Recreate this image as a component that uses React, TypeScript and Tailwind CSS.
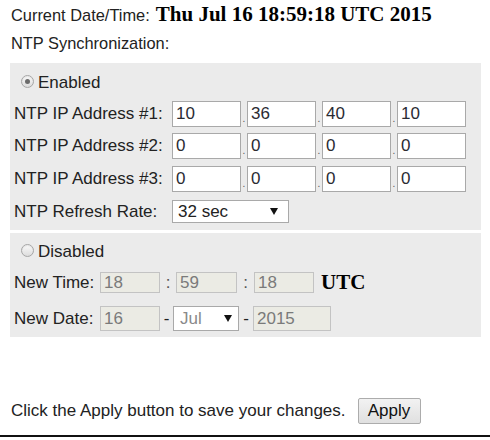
import React from 'react';

const Radio = ({ checked }: { checked?: boolean }) => (
  <span className="w-[13px] h-[13px] rounded-full border border-[#a6a6a6] bg-gradient-to-b from-[#fafafa] to-[#dcdcdc] flex items-center justify-center shadow-[inset_0_1px_1px_rgba(0,0,0,0.08)]">
    {checked && <span className="w-[5px] h-[5px] rounded-full bg-[#6b6b6b]" />}
  </span>
);

const Arrow = () => (
  <svg width="8" height="7" viewBox="0 0 8 7" className="shrink-0">
    <polygon points="0,0 8,0 4,7" fill="#111" />
  </svg>
);

const IpBox = ({ value }: { value: string }) => (
  <div className="w-[69px] h-full border border-[#a9a9a9] bg-white flex items-center pl-[3px] text-[#2b2b33]">
    {value}
  </div>
);

const Dot = () => (
  <span className="w-[6px] h-full flex items-end justify-center pb-[3px] text-[10px] leading-none text-[#555]">.</span>
);

const IpRow = ({ label, values, className }: { label: string; values: string[]; className: string }) => (
  <div className={`flex items-center h-[26px] ${className}`}>
    <span className="w-[162px] pl-[4px]">{label}</span>
    <IpBox value={values[0]} />
    <Dot />
    <IpBox value={values[1]} />
    <Dot />
    <IpBox value={values[2]} />
    <Dot />
    <IpBox value={values[3]} />
  </div>
);

const Disabled = ({ value, w }: { value: string; w: string }) => (
  <div className={`${w} h-full border border-[#c3c3c3] bg-[#ebebe4] flex items-center pl-[3px] text-[#7a7a7a]`}>
    {value}
  </div>
);

export default function App() {
  return (
    <div className="w-[490px] h-[440px] bg-white text-[17px] text-[#222] font-['Liberation_Sans',Arial,sans-serif] flex flex-col">
      <div className="h-[30px] flex items-center pl-[11px] text-[16.4px]">
        <span>Current Date/Time:</span>
        <span className="ml-[6px] font-bold text-[21px] text-black font-['Liberation_Serif','Times_New_Roman',serif]">
          Thu Jul 16 18:59:18 UTC 2015
        </span>
      </div>
      <div className="h-[26px] flex items-center pl-[11px] text-[16.4px]">NTP Synchronization:</div>

      {/* Enabled panel */}
      <div className="mt-[7px] ml-[10px] w-[471px] bg-[#ebebeb] flex flex-col pb-[7px]">
        <div className="mt-[6px] h-[24px] flex items-center pl-[11px] gap-[4px]">
          <Radio checked />
          <span className="pt-[3px]">Enabled</span>
        </div>
        <IpRow className="mt-[8px]" label="NTP IP Address #1:" values={['10', '36', '40', '10']} />
        <IpRow className="mt-[6px]" label="NTP IP Address #2:" values={['0', '0', '0', '0']} />
        <IpRow className="mt-[7px]" label="NTP IP Address #3:" values={['0', '0', '0', '0']} />
        <div className="mt-[8px] h-[23px] flex items-center">
          <span className="w-[162px] pl-[4px]">NTP Refresh Rate:</span>
          <div className="w-[117px] h-full border border-[#a9a9a9] bg-white flex items-center justify-between pl-[5px] pr-[10px]">
            <span>32 sec</span>
            <Arrow />
          </div>
        </div>
      </div>

      {/* Disabled panel */}
      <div className="mt-[3px] ml-[10px] w-[471px] bg-[#ebebeb] flex flex-col pb-[6px]">
        <div className="mt-[5px] h-[24px] flex items-center pl-[11px] gap-[4px]">
          <Radio />
          <span className="pt-[3px]">Disabled</span>
        </div>
        <div className="mt-[10px] h-[21px] flex items-center">
          <span className="w-[90px] pl-[4px]">New Time:</span>
          <Disabled value="18" w="w-[60px]" />
          <span className="w-[16px] text-center text-[#555]">:</span>
          <Disabled value="59" w="w-[61px]" />
          <span className="w-[17px] text-center text-[#555]">:</span>
          <Disabled value="18" w="w-[60px]" />
          <span className="ml-[7px] font-bold text-[21px] text-black font-['Liberation_Serif','Times_New_Roman',serif]">UTC</span>
        </div>
        <div className="mt-[13px] h-[25px] flex items-center">
          <span className="w-[90px] pl-[4px]">New Date:</span>
          <Disabled value="16" w="w-[60px]" />
          <span className="w-[13px] text-center">-</span>
          <div className="w-[66px] h-full border border-[#a9a9a9] bg-white flex items-center justify-between pl-[6px] pr-[6px] text-[#8a8a8a]">
            <span>Jul</span>
            <Arrow />
          </div>
          <span className="w-[14px] text-center">-</span>
          <Disabled value="2015" w="w-[78px]" />
        </div>
      </div>

      <div className="mt-[61px] h-[26px] flex items-center pl-[11px]">
        <span>Click the Apply button to save your changes.</span>
        <button className="ml-[12px] w-[63px] h-full border border-[#acacac] rounded-[2px] bg-gradient-to-b from-[#f2f2f2] to-[#e0e0e0] text-[17px] text-[#111] flex items-center justify-center">
          Apply
        </button>
      </div>
      <div className="mt-[11px] h-[2px] w-full bg-[#111]" />
    </div>
  );
}
